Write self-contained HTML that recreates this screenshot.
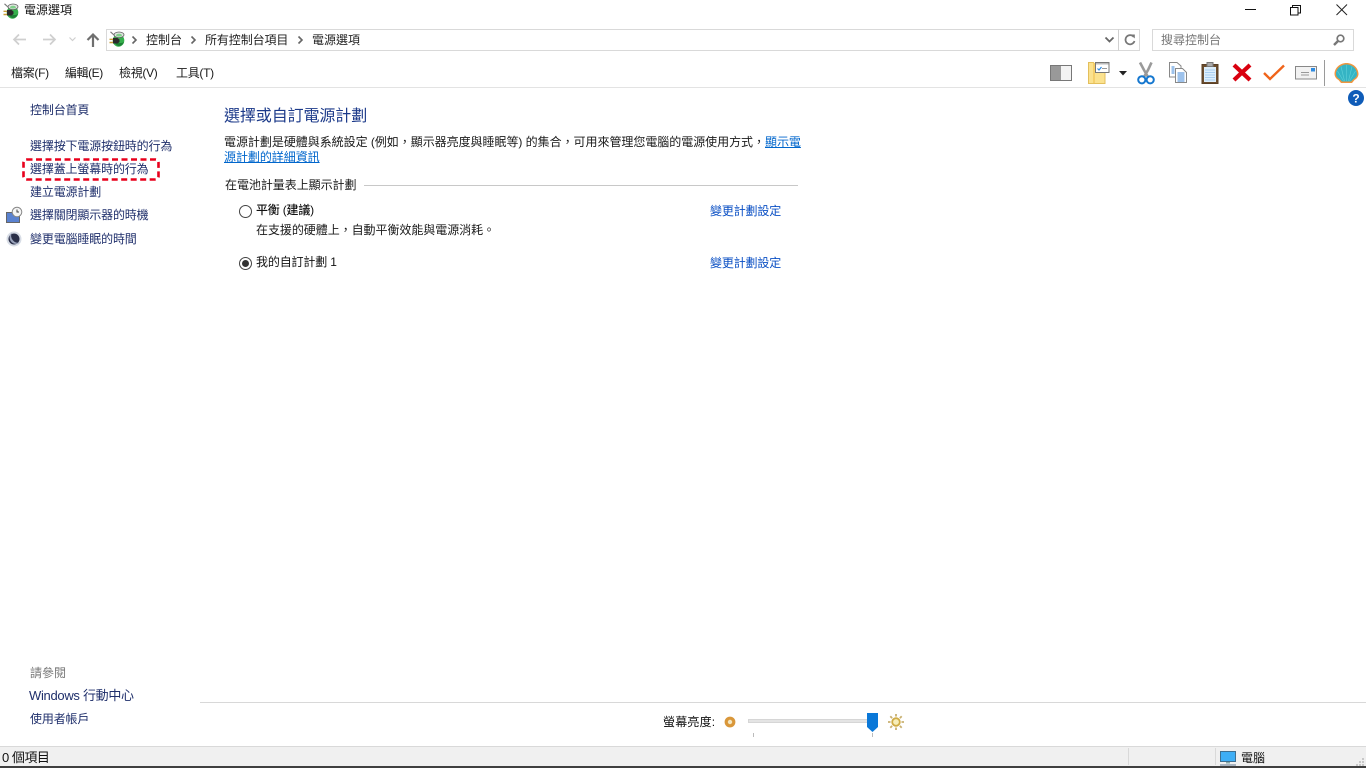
<!DOCTYPE html>
<html lang="zh-Hant"><head><meta charset="utf-8"><title>電源選項</title>
<style>
html,body{margin:0;padding:0;width:1366px;height:768px;overflow:hidden;background:#fff}
body{font-family:"Liberation Sans","Noto Sans CJK TC",sans-serif;font-size:12px;color:#1a1a1a;position:relative}
.t{position:absolute;white-space:nowrap;line-height:16px}
.n{color:#1f2f6b;letter-spacing:-.15px}
.l{color:#0a4fc4;letter-spacing:-.15px}
.m{letter-spacing:-.3px}
svg{position:absolute;overflow:visible}
.box{position:absolute;box-sizing:border-box}
</style></head><body>

<svg width="0" height="0" style="position:absolute"><defs>
<symbol id="pw" viewBox="0 0 16 16">
<ellipse cx="9.500" cy="9.500" rx="5.800" ry="6.200" fill="#35b04c"/>
<path d="M5 10c1 3 3 5 5 5s4-1.500 5-4c-2 1.500-7 1.500-10-1z" fill="#1d7f35"/>
<ellipse cx="10" cy="3.800" rx="5" ry="2.800" fill="#dfe6df" stroke="#666" stroke-width=".8"/>
<ellipse cx="10" cy="4.200" rx="3" ry="1.400" fill="#7fd08a"/>
<path d="M1.500 .8 5.500 4.500" stroke="#777" stroke-width="1.100" fill="none"/>
<path d="M4 7h4.500l2 1.500v2.500l-2 1.500H4z" fill="#2b2b2b"/>
<path d="M.5 8.300H4M.5 11.500H4" stroke="#c9a13a" stroke-width="1.400"/>
</symbol>
</defs></svg>

<!-- title bar -->
<svg style="left:3px;top:3px" width="16" height="16"><use href="#pw" width="16" height="16"/></svg>
<div class="t" style="left:24px;top:2px;color:#111">電源選項</div>
<svg style="left:1245px;top:9px" width="12" height="2"><rect width="11" height="1" fill="#111"/></svg>
<svg style="left:1290px;top:5px" width="11" height="11"><path d="M.5 2.500h7.500v7.500H.5zM2.500 2.500V.5H10.500V8H8" fill="none" stroke="#111"/></svg>
<svg style="left:1336px;top:4px" width="12" height="12"><path d="M.5.5l10.500 10.500M11 .5.5 11" stroke="#222" fill="none"/></svg>

<!-- nav -->
<svg style="left:12px;top:33px" width="15" height="13"><path d="M14 6.500H2M7 1.500 2 6.500l5 5" fill="none" stroke="#cfcfcf" stroke-width="1.700"/></svg>
<svg style="left:42px;top:33px" width="15" height="13"><path d="M1 6.500H13M8 1.500l5 5-5 5" fill="none" stroke="#cfcfcf" stroke-width="1.700"/></svg>
<svg style="left:69px;top:37px" width="8" height="5"><path d="M.5.5 3.500 3.500 6.500.5" fill="none" stroke="#cfcfcf" stroke-width="1.200"/></svg>
<svg style="left:86px;top:33px" width="14" height="14"><path d="M7 14V2M1.500 7 7 1.500 12.500 7" fill="none" stroke="#6f6f6f" stroke-width="2.200"/></svg>

<div class="box" style="left:106px;top:29px;width:1013px;height:22px;border:1px solid #d9d9d9"></div>
<div class="box" style="left:1118px;top:29px;width:22px;height:22px;border:1px solid #d9d9d9;border-left-color:#d0d0d0"></div>
<svg style="left:109px;top:31px" width="16" height="16"><use href="#pw" width="16" height="16"/></svg>
<svg style="left:132px;top:36px" width="5" height="8"><path d="M.5.5 4 4 .5 7.500" fill="none" stroke="#666" stroke-width="1.600"/></svg>
<div class="t" style="left:146px;top:32px;color:#222">控制台</div>
<svg style="left:191px;top:36px" width="5" height="8"><path d="M.5.5 4 4 .5 7.500" fill="none" stroke="#666" stroke-width="1.600"/></svg>
<div class="t" style="left:205px;top:32px;color:#222;letter-spacing:-.1px">所有控制台項目</div>
<svg style="left:298px;top:36px" width="5" height="8"><path d="M.5.5 4 4 .5 7.500" fill="none" stroke="#666" stroke-width="1.600"/></svg>
<div class="t" style="left:312px;top:32px;color:#222">電源選項</div>
<svg style="left:1105px;top:37px" width="10" height="6"><path d="M.5.5 4.500 4.500 8.500.5" fill="none" stroke="#666" stroke-width="1.800"/></svg>
<svg style="left:1124px;top:34px" width="12" height="12"><path d="M9.800 3A4.600 4.600 0 1 0 10.500 7" fill="none" stroke="#777" stroke-width="1.700"/><path d="M7 .5h3.800V4.500z" fill="#777"/></svg>

<div class="box" style="left:1152px;top:29px;width:202px;height:22px;border:1px solid #d9d9d9"></div>
<div class="t" style="left:1161px;top:32px;color:#777">搜尋控制台</div>
<svg style="left:1333px;top:34px" width="12" height="12"><circle cx="7.500" cy="4.500" r="3.300" fill="none" stroke="#777" stroke-width="1.700"/><path d="M5 7 1 11" stroke="#777" stroke-width="2.400"/></svg>

<!-- menu -->
<div class="t m" style="left:11px;top:65px">檔案(F)</div>
<div class="t m" style="left:65px;top:65px;letter-spacing:-.45px">編輯(E)</div>
<div class="t m" style="left:119px;top:65px">檢視(V)</div>
<div class="t m" style="left:176px;top:65px">工具(T)</div>

<!-- toolbar icons -->
<svg style="left:1050px;top:65px" width="23" height="17"><rect x=".5" y=".5" width="21" height="15" fill="#f3f3f3" stroke="#777"/><rect x="1" y="1" width="10" height="14" fill="#999"/></svg>
<svg style="left:1088px;top:62px" width="22" height="23"><path d="M.5.5h5l1.500 2V6.500h10V21.500H.5z" fill="#fbe28f" stroke="#e3bf5c"/><path d="M5 1h2v20H5z" fill="#f5cf6b"/><rect x="7.500" y=".5" width="13.500" height="10" fill="#fff" stroke="#777"/><rect x="8" y="1" width="12.500" height="1.500" fill="#bbb"/><path d="M9.500 6.500 11 8l2.500-3" fill="none" stroke="#2d8ae0" stroke-width="1.200"/><path d="M14 6.500h5" stroke="#999"/></svg>
<svg style="left:1119px;top:71px" width="8" height="5"><path d="M0 0h8L4 4.500z" fill="#222"/></svg>
<svg style="left:1137px;top:62px" width="18" height="23"><path d="M3 .5 7 8l4 7M14.500.5 11 8l-4 7" stroke="#9a9a9a" stroke-width="2.600" fill="none"/><circle cx="4.800" cy="17.800" r="3.600" fill="none" stroke="#1577cf" stroke-width="2"/><circle cx="13.200" cy="17.800" r="3.600" fill="none" stroke="#1577cf" stroke-width="2"/></svg>
<svg style="left:1169px;top:62px" width="19" height="21"><path d="M.5.5H8L12 4V15H.5z" fill="#fff" stroke="#888"/><path d="M6.500 6.500h7l4 4v10h-11z" fill="#fff" stroke="#888"/><path d="M8.500 11h7M8.500 13h7M8.500 15h7M8.500 17h7M8.500 19h7" stroke="#3b86d8"/><path d="M2.500 5h3M2.500 7h3M2.500 9h3M2.500 11h3" stroke="#3b86d8"/></svg>
<svg style="left:1201px;top:62px" width="18" height="22"><rect x="1" y="2.500" width="16" height="19" fill="#6b4d2e" stroke="#5a3f25"/><rect x="3" y="5" width="12" height="15" fill="#dceefc"/><path d="M4 8h10M4 10.500h10M4 13h10M4 15.500h10M4 18h10" stroke="#a8cdf0"/><rect x="6" y=".5" width="6" height="4" fill="#aaa" stroke="#777"/></svg>
<svg style="left:1232px;top:63px" width="20" height="19"><path d="M2 2 18 17M18 2 2 17" stroke="#d9000f" stroke-width="4.200" fill="none"/></svg>
<svg style="left:1263px;top:64px" width="22" height="17"><path d="M1 9l6 6L21 1.500" stroke="#f0641a" stroke-width="2.400" fill="none"/></svg>
<svg style="left:1295px;top:66px" width="22" height="14"><rect x=".5" y=".5" width="21" height="12.500" fill="#f2f2f2" stroke="#888"/><rect x="16" y="2" width="4" height="3.500" fill="#2e8be0"/><path d="M6 6.500h8M6 9h8" stroke="#999"/></svg>
<div class="box" style="left:1324px;top:60px;width:1px;height:26px;background:#9a9a9a"></div>
<svg style="left:1334px;top:62px" width="25" height="22"><path d="M12.500 1C6 1 .5 6 .5 12c0 2.500 2 5 4 6l2.500 3h11l2.500-3c2-1 4-3.500 4-6C24.500 6 19 1 12.500 1z" fill="#f0963f"/><path d="M12.500 2.500C7 2.500 2 6.500 2 12c0 2 1.500 4 3.500 5l2.500 2.500h9l2.500-2.500c2-1 3.500-3 3.500-5 0-5.500-5-9.500-10.500-9.500z" fill="#35b4c4"/><path d="M12.500 3v16M7 4.500l3.500 14.500M18 4.500l-3.500 14.500M3.500 9l6 10M21.500 9l-6 10" stroke="#5fd0d8" stroke-width=".6"/></svg>
<div class="box" style="left:0;top:87px;width:1366px;height:1px;background:#e3e3e3"></div>
<svg style="left:1348px;top:90px" width="16" height="16"><circle cx="8" cy="8" r="8" fill="#0f5cb8"/><text x="8" y="12.500" text-anchor="middle" font-family="Liberation Sans" font-weight="700" font-size="12" fill="#fff">?</text></svg>

<!-- sidebar -->
<div class="t n" style="left:30px;top:102px">控制台首頁</div>
<div class="t n" style="left:30px;top:138px">選擇按下電源按鈕時的行為</div>
<div class="t n" style="left:30px;top:161px">選擇蓋上螢幕時的行為</div>
<div class="t n" style="left:30px;top:184px">建立電源計劃</div>
<div class="t n" style="left:30px;top:207px">選擇關閉顯示器的時機</div>
<div class="t n" style="left:30px;top:231px">變更電腦睡眠的時間</div>
<svg style="left:22px;top:158px" width="138" height="24"><rect x="1.500" y="1.500" width="135" height="20" rx="3" fill="none" stroke="#e8001c" stroke-width="2.600" stroke-dasharray="6 3.500"/></svg>
<svg style="left:6px;top:207px" width="17" height="16"><rect x=".5" y="5.500" width="13" height="10" fill="#5a82d0" stroke="#666"/><circle cx="11" cy="5" r="4.800" fill="#f5f5f5" stroke="#888"/><path d="M11 2.500V5h2" stroke="#444" fill="none"/></svg>
<svg style="left:6px;top:231px" width="16" height="16"><circle cx="8" cy="8" r="7.500" fill="#d8dde6"/><circle cx="8" cy="8" r="5.500" fill="#2a2f48"/><path d="M6 1.500a7 7 0 0 0 8 10 6 6 0 0 1-8-10z" fill="#9aa3bb"/></svg>

<div class="t" style="left:30px;top:665px;color:#777">請參閱</div>
<div class="t n" style="left:29px;top:688px;font-size:13px;letter-spacing:-.3px">Windows 行動中心</div>
<div class="t n" style="left:30px;top:711px">使用者帳戶</div>

<!-- main -->
<div class="t" style="left:224px;top:107px;font-size:16px;line-height:20px;color:#1c3a8a;letter-spacing:-.1px">選擇或自訂電源計劃</div>
<div class="t" style="left:224px;top:134px;letter-spacing:-.035px">電源計劃是硬體與系統設定 (例如，顯示器亮度與睡眠等) 的集合，可用來管理您電腦的電源使用方式，<a style="color:#0066cc;text-decoration:underline">顯示電</a></div>
<div class="t" style="left:224px;top:149px;letter-spacing:-.05px"><a style="color:#0066cc;text-decoration:underline">源計劃的詳細資訊</a></div>
<div class="t" style="left:225px;top:177px;letter-spacing:-.05px">在電池計量表上顯示計劃</div>
<div class="box" style="left:364px;top:185px;width:434px;height:1px;background:#c8c8c8"></div>

<svg style="left:239px;top:205px" width="13" height="13"><circle cx="6.500" cy="6.500" r="6" fill="#fff" stroke="#444"/></svg>
<div class="t" style="left:256px;top:202px;color:#111;font-weight:500;letter-spacing:-.2px">平衡 (建議)</div>
<div class="t" style="left:256px;top:222px;letter-spacing:-.05px">在支援的硬體上，自動平衡效能與電源消耗。</div>
<svg style="left:239px;top:257px" width="13" height="13"><circle cx="6.500" cy="6.500" r="6" fill="#fff" stroke="#444"/><circle cx="6.500" cy="6.500" r="3.500" fill="#333"/></svg>
<div class="t" style="left:256px;top:254px;color:#111;letter-spacing:-.15px">我的自訂計劃 1</div>
<div class="t l" style="left:710px;top:203px">變更計劃設定</div>
<div class="t l" style="left:710px;top:255px">變更計劃設定</div>

<!-- brightness -->
<div class="box" style="left:200px;top:702px;width:1166px;height:1px;background:#d8d8d8"></div>
<div class="t" style="left:663px;top:714px;color:#111;letter-spacing:.2px">螢幕亮度:</div>
<svg style="left:724px;top:716px" width="12" height="12"><circle cx="6" cy="6" r="3.800" fill="#f3e6c0" stroke="#d9973a" stroke-width="3.200"/></svg>
<div class="box" style="left:748px;top:719px;width:125px;height:4px;background:#e4e4e4;border:1px solid #d6d6d6"></div>
<svg style="left:867px;top:713px" width="11" height="20"><path d="M0 0h11v14l-5.500 5L0 14z" fill="#0a78d8"/></svg>
<div class="box" style="left:753px;top:733px;width:1px;height:4px;background:#bbb"></div>
<div class="box" style="left:872px;top:733px;width:1px;height:4px;background:#bbb"></div>
<svg style="left:888px;top:714px" width="16" height="16"><circle cx="8" cy="8" r="3.800" fill="#f7eeb8" stroke="#d0ac45" stroke-width="1.800"/><path d="M8 0v2.500M8 13.500V16M0 8h2.500M13.500 8H16M2.300 2.300l1.800 1.800M11.900 11.900l1.800 1.800M13.700 2.300l-1.800 1.800M4.100 11.900l-1.800 1.800" stroke="#c9b070" stroke-width="1.800"/></svg>

<!-- status bar -->
<div class="box" style="left:0;top:746px;width:1366px;height:20px;background:#f0f0f0;border-top:1px solid #d9d9d9"></div>
<div class="box" style="left:0;top:766px;width:1366px;height:2px;background:#3f3f3f"></div>
<div class="t" style="left:2px;top:750px;font-size:13px;color:#111;letter-spacing:-.5px">0 個項目</div>
<div class="box" style="left:1128px;top:748px;width:1px;height:17px;background:#d9d9d9"></div>
<div class="box" style="left:1215px;top:748px;width:1px;height:17px;background:#d9d9d9"></div>
<svg style="left:1220px;top:751px" width="16" height="15"><rect x=".5" y=".5" width="15" height="10" fill="#3eaef5" stroke="#3f6f90"/><rect x="6" y="11" width="4" height="1.500" fill="#8aa"/><rect y="13" width="16" height="2" fill="#a9b4c0"/></svg>
<div class="t" style="left:1241px;top:750px;color:#111">電腦</div>
<svg style="left:1356px;top:758px" width="9" height="8"><g fill="#c8c8c8"><rect x="6" y="0" width="2" height="2"/><rect x="3" y="3" width="2" height="2"/><rect x="6" y="3" width="2" height="2"/><rect x="0" y="6" width="2" height="2"/><rect x="3" y="6" width="2" height="2"/><rect x="6" y="6" width="2" height="2"/></g></svg>
</body></html>
